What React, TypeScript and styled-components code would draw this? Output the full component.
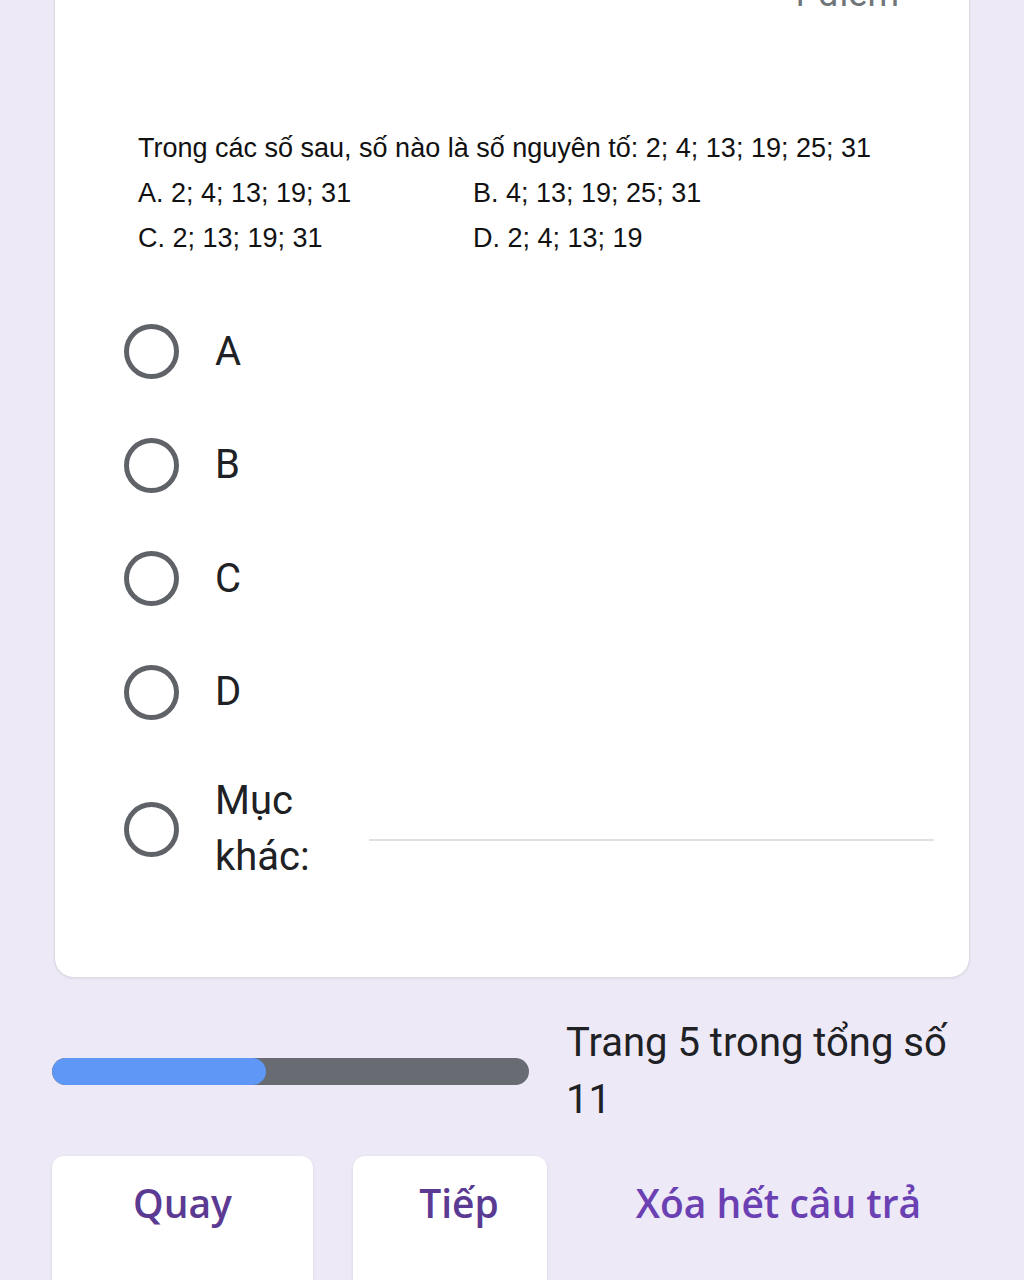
import React from "react";
import styled, { createGlobalStyle } from "styled-components";

const GlobalStyle = createGlobalStyle`
  html, body {
    margin: 0;
    padding: 0;
    background: #ede9f7;
    overflow: hidden;
  }
  body {
    font-family: Roboto, "Noto Sans", Arial, sans-serif;
    color: #202124;
  }
`;

const Page = styled.div`
  width: 1024px;
  height: 1280px;
  overflow: hidden;
  background: #ede9f7;
`;

const Card = styled.section`
  margin: -60px 54px 0 54px;
  padding: 35px 35px 80px 69px;
  background: #ffffff;
  border: 1px solid #dcdbe2;
  border-radius: 20px;
  box-shadow: 0 1px 2px rgba(60, 64, 67, 0.08);
`;

const Points = styled.div`
  font-size: 36px;
  line-height: 36px;
  color: #70757a;
  text-align: right;
  padding-right: 35px;
`;

const Question = styled.div`
  margin: 114px 0 0 14px;
  font-family: "Liberation Sans", Arial, sans-serif;
  font-size: 27px;
  line-height: 45px;
  color: #111;
`;

const Choices = styled.div`
  display: grid;
  grid-template-columns: 335px 1fr;
`;

const Options = styled.div`
  margin-top: 34px;
  display: flex;
  flex-direction: column;
`;

const OptionRow = styled.label<{ $tall?: boolean }>`
  display: flex;
  align-items: center;
  min-height: ${(p) => (p.$tall ? "136px" : "113.5px")};
  margin-top: ${(p) => (p.$tall ? "12px" : "0")};
`;

const Radio = styled.span`
  flex: none;
  width: 55px;
  height: 55px;
  box-sizing: border-box;
  border: 5px solid #5f6368;
  border-radius: 50%;
`;

const OptionText = styled.span`
  margin-left: 36px;
  font-size: 40px;
  line-height: 56px;
  color: #202124;
`;

const OtherText = styled(OptionText)`
  width: 130px;
`;

const OtherInput = styled.span`
  flex: 1;
  margin-left: 24px;
  height: 20px;
  border-bottom: 2px solid #e0e0e0;
  margin-top: 2px;
`;

const ProgressRow = styled.div`
  display: flex;
  align-items: center;
  padding: 36px 54px 0 52px;
`;

const Track = styled.div`
  flex: none;
  width: 477px;
  height: 27px;
  border-radius: 14px;
  background: #686b72;
  overflow: hidden;
`;

const Fill = styled.div`
  height: 100%;
  border-radius: 14px;
  background: #5e97f6;
`;

const PageText = styled.div`
  margin-left: 37px;
  flex: 1;
  font-size: 40px;
  line-height: 57px;
  color: #202124;
`;

const Buttons = styled.div`
  display: flex;
  gap: 40px;
  padding: 28px 54px 0 52px;
`;

const NavButton = styled.button<{ $w: number; $shift?: number }>`
  width: ${(p) => p.$w}px;
  min-height: 160px;
  padding: 18px 0 0 ${(p) => p.$shift ?? 0}px;
  display: flex;
  justify-content: center;
  align-items: flex-start;
  background: #ffffff;
  border: none;
  border-radius: 12px;
  box-shadow: 0 1px 3px rgba(60, 64, 67, 0.12);
  font-family: "Open Sans", Roboto, sans-serif;
  font-size: 39px;
  font-weight: 600;
  line-height: 57px;
  color: #5b3a93;
`;

const ClearButton = styled.button`
  flex: 1;
  padding: 18px 0 0;
  display: flex;
  justify-content: center;
  align-items: flex-start;
  background: transparent;
  border: none;
  font-family: "Open Sans", Roboto, sans-serif;
  font-size: 39px;
  font-weight: 600;
  line-height: 57px;
  color: #6a40b3;
  white-space: nowrap;
`;

const options = ["A", "B", "C", "D"];

export default function App() {
  const current = 5;
  const total = 11;
  return (
    <Page>
      <GlobalStyle />
      <Card>
        <Points>1 điểm</Points>
        <Question>
          <div>Trong các số sau, số nào là số nguyên tố: 2; 4; 13; 19; 25; 31</div>
          <Choices>
            <div>A. 2; 4; 13; 19; 31</div>
            <div>B. 4; 13; 19; 25; 31</div>
            <div>C. 2; 13; 19; 31</div>
            <div>D. 2; 4; 13; 19</div>
          </Choices>
        </Question>
        <Options>
          {options.map((o) => (
            <OptionRow key={o}>
              <Radio />
              <OptionText>{o}</OptionText>
            </OptionRow>
          ))}
          <OptionRow $tall>
            <Radio />
            <OtherText>Mục khác:</OtherText>
            <OtherInput />
          </OptionRow>
        </Options>
      </Card>
      <ProgressRow>
        <Track>
          <Fill style={{ width: `${(214 / 477) * 100}%` }} />
        </Track>
        <PageText>
          Trang {current} trong tổng số {total}
        </PageText>
      </ProgressRow>
      <Buttons>
        <NavButton $w={261}>Quay</NavButton>
        <NavButton $w={194} $shift={18}>Tiếp</NavButton>
        <ClearButton>Xóa hết câu trả</ClearButton>
      </Buttons>
    </Page>
  );
}
